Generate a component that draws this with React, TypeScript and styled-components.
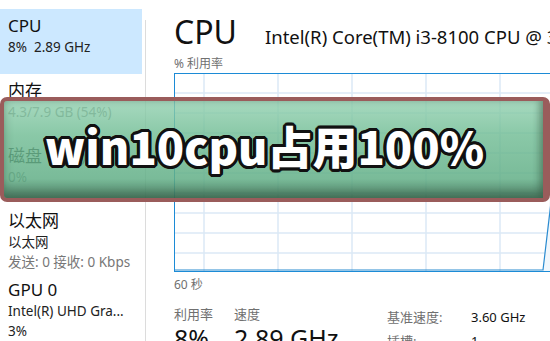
import React from "react";
import styled, { createGlobalStyle } from "styled-components";

const Global = createGlobalStyle`
  html, body { margin: 0; padding: 0; background: #fff; }
  body { width: 550px; height: 341px; overflow: hidden; font-family: "Noto Sans", "Noto Sans CJK SC", sans-serif; }
  #root { width: 550px; height: 341px; overflow: hidden; position: relative; }
`;

const Page = styled.div`
  display: flex;
  width: 550px;
  height: 341px;
  overflow: hidden;
  position: relative;
  background: #fff;
  color: #111;
`;

const Sidebar = styled.div`
  width: 142px;
  flex: none;
  padding-top: 9px;
  display: flex;
  flex-direction: column;
`;

const Separator = styled.div`
  width: 1px;
  flex: none;
  margin: 20px 0 0 3px;
  background: #dcdcdc;
`;

const Item = styled.div<{ $active?: boolean }>`
  box-sizing: border-box;
  min-height: 65px;
  padding: 6px 8px 9px;
  background: ${(p) => (p.$active ? "#cce8ff" : "transparent")};
  white-space: nowrap;
`;

const ItemTitle = styled.div`
  font-size: 17px;
  line-height: 22px;
  color: #111;
`;

const ItemSub = styled.div<{ $muted?: boolean }>`
  font-size: 13.5px;
  line-height: 20px;
  color: ${(p) => (p.$muted ? "#777" : "#222")};
`;

const Main = styled.div`
  flex: 1;
  min-width: 0;
  padding: 12px 0 0 28px;
  display: flex;
  flex-direction: column;
  white-space: nowrap;
`;

const Header = styled.div`
  display: flex;
  align-items: baseline;
  gap: 28px;
`;

const BigTitle = styled.div`
  font-size: 32px;
  line-height: 40px;
  color: #111;
`;

const CpuName = styled.div`
  font-size: 18.5px;
  color: #111;
`;

const SmallLabel = styled.div`
  font-size: 12px;
  line-height: 16px;
  color: #707070;
`;

const GraphBox = styled.div`
  width: 420px;
  height: 199px;
  border: 1px solid #1c8bd6;
  border-right: none;
  margin: 1px 0 5px;
  box-sizing: border-box;
  position: relative;
`;

const Stats = styled.div`
  display: flex;
  margin-top: 12px;
`;

const StatCol = styled.div<{ $w: number }>`
  width: ${(p) => p.$w}px;
  flex: none;
  display: flex;
  flex-direction: column;
`;

const StatLabel = styled.div`
  font-size: 13px;
  line-height: 18px;
  color: #707070;
`;

const StatValue = styled.div`
  font-size: 25px;
  line-height: 30px;
  color: #111;
`;

const InfoGrid = styled.div`
  display: grid;
  grid-template-columns: 84px auto;
  row-gap: 2px;
  margin-top: 3px;
`;

const InfoKey = styled.div`
  font-size: 13px;
  line-height: 18px;
  color: #707070;
`;

const InfoVal = styled.div`
  font-size: 13px;
  line-height: 18px;
  color: #111;
`;

const Banner = styled.div`
  position: absolute;
  left: 0;
  top: 97px;
  width: 550px;
  height: 105px;
  box-sizing: border-box;
  border: 4px solid #9a5c5b;
  border-right-width: 7px;
  border-radius: 7px;
  background: linear-gradient(
    to bottom,
    rgba(145, 208, 175, 0.8) 0%,
    rgba(112, 188, 148, 0.82) 35%,
    rgba(98, 175, 135, 0.85) 80%,
    rgba(72, 132, 102, 0.9) 100%
  );
  box-shadow: inset 0 -8px 10px rgba(40, 70, 50, 0.35), inset -4px 0 6px rgba(40, 70, 50, 0.3);
  display: flex;
  align-items: center;
  justify-content: center;
`;

const BannerText = styled.div`
  font-family: "Noto Sans CJK SC", "Noto Sans", sans-serif;
  font-weight: 900;
  font-size: 45px;
  line-height: 1;
  color: #fff;
  margin: 0 18px 8px 0;
  text-shadow:
    2px 0 0 #111, -2px 0 0 #111, 0 2px 0 #111, 0 -2px 0 #111,
    2px 2px 0 #111, -2px -2px 0 #111, 2px -2px 0 #111, -2px 2px 0 #111,
    3px 0 0 #111, -3px 0 0 #111, 0 3px 0 #111, 0 -3px 0 #111,
    1px 3px 0 #111, -1px 3px 0 #111, 1px -3px 0 #111, -1px -3px 0 #111,
    3px 1px 0 #111, 3px -1px 0 #111, -3px 1px 0 #111, -3px -1px 0 #111;
`;

function Graph() {
  const vx = [29, 103, 177, 251, 325, 399];
  const hy = [20, 40, 60, 80, 100, 120, 140, 160, 180];
  return (
    <svg width="420" height="197" style={{ display: "block" }}>
      {vx.map((x) => (
        <line key={"v" + x} x1={x} y1={0} x2={x} y2={197} stroke="#dbe9f6" strokeWidth="1.5" />
      ))}
      {hy.map((y) => (
        <line key={"h" + y} x1={0} y1={y - 1} x2={420} y2={y - 1} stroke="#dbe9f6" strokeWidth="1.5" />
      ))}
      <polygon points="368,197 377,100 420,100 420,197" fill="#f1f7fc" />
      <polyline points="0,196 368,196 377,120" fill="none" stroke="#2a8bd0" strokeWidth="1.2" />
    </svg>
  );
}

export default function App() {
  return (
    <>
      <Global />
      <Page>
        <Sidebar>
          <Item $active>
            <ItemTitle>CPU</ItemTitle>
            <ItemSub>8%&nbsp; 2.89 GHz</ItemSub>
          </Item>
          <Item>
            <ItemTitle>内存</ItemTitle>
            <ItemSub $muted>4.3/7.9 GB (54%)</ItemSub>
          </Item>
          <Item>
            <ItemTitle>磁盘 0 (C:)</ItemTitle>
            <ItemSub $muted>0%</ItemSub>
          </Item>
          <Item>
            <ItemTitle>以太网</ItemTitle>
            <ItemSub>以太网</ItemSub>
            <ItemSub $muted>发送: 0 接收: 0 Kbps</ItemSub>
          </Item>
          <Item>
            <ItemTitle>GPU 0</ItemTitle>
            <ItemSub>Intel(R) UHD Gra...</ItemSub>
            <ItemSub>3%</ItemSub>
          </Item>
        </Sidebar>
        <Separator />
        <Main>
          <Header>
            <BigTitle>CPU</BigTitle>
            <CpuName>Intel(R) Core(TM) i3-8100 CPU @ 3.60GHz</CpuName>
          </Header>
          <SmallLabel style={{ marginTop: 4 }}>% 利用率</SmallLabel>
          <GraphBox>
            <Graph />
          </GraphBox>
          <SmallLabel>60 秒</SmallLabel>
          <Stats>
            <StatCol $w={60}>
              <StatLabel>利用率</StatLabel>
              <StatValue>8%</StatValue>
            </StatCol>
            <StatCol $w={153}>
              <StatLabel>速度</StatLabel>
              <StatValue>2.89 GHz</StatValue>
            </StatCol>
            <InfoGrid>
              <InfoKey>基准速度:</InfoKey>
              <InfoVal>3.60 GHz</InfoVal>
              <InfoKey>插槽:</InfoKey>
              <InfoVal>1</InfoVal>
            </InfoGrid>
          </Stats>
        </Main>
        <Banner>
          <BannerText>win10cpu占用100%</BannerText>
        </Banner>
      </Page>
    </>
  );
}
